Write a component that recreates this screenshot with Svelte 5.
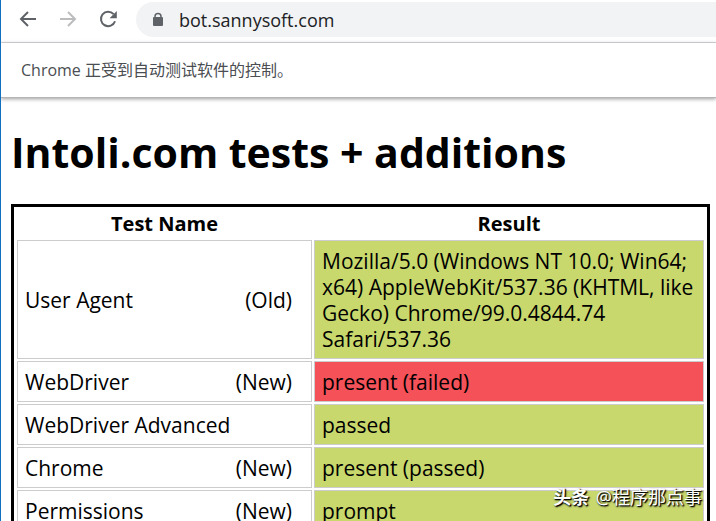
<script lang="ts">
  type Row = {
    name: string;
    tag?: string;
    result: string;
    failed?: boolean;
  };

  let url = $state("bot.sannysoft.com");

  const rows: Row[] = [
    {
      name: "User Agent",
      tag: "(Old)",
      result:
        "Mozilla/5.0 (Windows NT 10.0; Win64; x64) AppleWebKit/537.36 (KHTML, like Gecko) Chrome/99.0.4844.74 Safari/537.36",
    },
    { name: "WebDriver", tag: "(New)", result: "present (failed)", failed: true },
    { name: "WebDriver Advanced", result: "passed" },
    { name: "Chrome", tag: "(New)", result: "present (passed)" },
    { name: "Permissions", tag: "(New)", result: "prompt" },
  ];
</script>

<div class="window">
  <header class="toolbar">
    <button class="nav-btn" aria-label="Back">
      <svg viewBox="0 0 20 20" width="20" height="20">
        <path d="M18 9H3M10 2L3 9l7 7" />
      </svg>
    </button>
    <button class="nav-btn" aria-label="Forward" disabled>
      <svg viewBox="0 0 20 20" width="20" height="20">
        <path d="M2 9h15M10 2l7 7-7 7" />
      </svg>
    </button>
    <button class="nav-btn" aria-label="Reload">
      <svg viewBox="0 0 20 20" width="20" height="20">
        <path d="M15.6 4.2A7.2 7.2 0 1 0 17 11.2" />
        <path class="solid" d="M18.8 1v7.2h-7.2z" />
      </svg>
    </button>
    <div class="omnibox">
      <svg class="lock" viewBox="0 0 12 16" width="12" height="16">
        <path d="M3 7V4.5a3 3 0 0 1 6 0V7" />
        <rect x="1" y="5" width="10" height="9" rx="1" />
      </svg>
      <input type="text" aria-label="Address" bind:value={url} />
    </div>
  </header>

  <div class="infobar">Chrome 正受到自动测试软件的控制。</div>

  <main class="page">
    <h1>Intoli.com tests + additions</h1>

    <table>
      <thead>
        <tr>
          <th class="name-col">Test Name</th>
          <th>Result</th>
        </tr>
      </thead>
      <tbody>
        {#each rows as row}
          <tr>
            <td>
              <div class="name">
                <span>{row.name}</span>
                {#if row.tag}<span>{row.tag}</span>{/if}
              </div>
            </td>
            <td class={row.failed ? "failed" : "passed"}>{row.result}</td>
          </tr>
        {/each}
      </tbody>
    </table>
  </main>

  <div class="watermark"><b>头条</b> @程序那点事</div>
</div>

<style>
  :global(body) {
    margin: 0;
  }

  .window {
    position: relative;
    display: flex;
    flex-direction: column;
    box-sizing: border-box;
    height: 100vh;
    overflow: hidden;
    border-left: 1px solid #1070bf;
    background: #fff;
    color: #000;
    font-family: "Open Sans", "Noto Sans CJK SC", sans-serif;
    font-size: 20px;
    line-height: 26px;
  }

  .toolbar {
    display: flex;
    flex-shrink: 0;
    align-items: center;
    gap: 20px;
    padding: 2px 0 5px 17px;
    border-bottom: 1px solid #dadce0;
  }

  .nav-btn {
    display: flex;
    padding: 0;
    border: none;
    background: none;
    color: #5f6368;
  }

  .nav-btn:disabled {
    color: #babcbe;
  }

  svg {
    fill: none;
    stroke: currentColor;
    stroke-width: 2;
  }

  .solid {
    fill: currentColor;
    stroke: none;
  }

  .omnibox {
    display: flex;
    flex: 1;
    align-items: center;
    gap: 15px;
    height: 35px;
    margin-left: -2px;
    padding-left: 16px;
    border-radius: 18px 0 0 18px;
    background: #f1f3f4;
  }

  .lock {
    flex-shrink: 0;
    color: #5f6368;
    stroke-width: 1.5;
  }

  .lock rect {
    fill: currentColor;
    stroke: none;
  }

  .omnibox input {
    flex: 1;
    min-width: 0;
    padding: 0;
    border: none;
    outline: none;
    background: none;
    color: #202124;
    font: inherit;
    font-size: 18px;
  }

  .infobar {
    flex-shrink: 0;
    padding: 14px 20px;
    border-bottom: 1px solid #b4b5b7;
    box-shadow: 0 1px 4px rgba(0, 0, 0, 0.4);
    color: #4a4d51;
    font-size: 16px;
  }

  .page {
    padding: 24px 6px 0 10px;
  }

  h1 {
    margin: 0 0 22px;
    font-size: 41px;
    line-height: 60px;
  }

  table {
    width: 100%;
    padding: 1px;
    border: 3px solid #000;
    border-spacing: 2px;
    table-layout: fixed;
  }

  th {
    padding: 1px;
  }

  .name-col {
    width: 293px;
  }

  td {
    padding: 7px 7px 6px;
    border: 1px solid #ccc;
    font-size: 21px;
  }

  .name {
    display: flex;
    justify-content: space-between;
    padding-right: 12px;
  }

  .passed {
    background: #c8d86d;
  }

  .failed {
    background: #f45159;
  }

  .watermark {
    position: absolute;
    right: 14px;
    bottom: 11px;
    color: #fff;
    font-size: 18px;
    text-shadow: 1px 1px 1px #000, 1px 1px 2px #000;
  }

  .watermark b {
    margin-right: 2px;
  }
</style>
